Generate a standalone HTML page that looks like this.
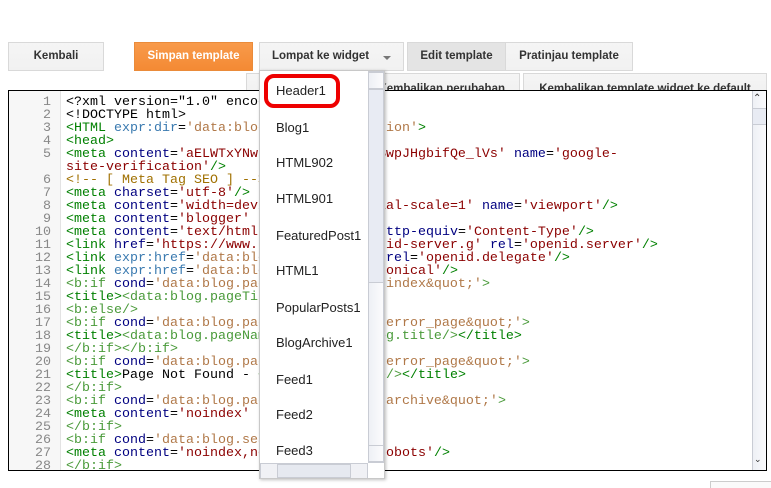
<!DOCTYPE html>
<html><head><style>
*{margin:0;padding:0;box-sizing:border-box}
body{width:771px;height:488px;background:#fff;position:relative;overflow:hidden;font-family:"Liberation Sans",sans-serif}
.btn{position:absolute;height:29px;border:1px solid #d9d9d9;background:linear-gradient(#f5f5f5,#f1f1f1);font-size:11.5px;font-weight:bold;color:#333;text-align:center;line-height:27px}
.ed{position:absolute;left:8px;top:90px;width:759px;height:381px;border:1px solid #000;overflow:hidden;background:#fff}
.gut{position:absolute;left:0;top:0;width:52px;height:100%;background:#f7f7f7;border-right:1px solid #e3e3e3}
.code{position:absolute;left:0;top:5px;font-family:"Liberation Mono",monospace;font-size:13.33px;line-height:13px}
.r{height:13px;white-space:pre;line-height:13px}
.n{display:inline-block;width:42px;text-align:right;color:#888;margin-right:15px}
.t{color:#008000}.a{color:#000080}.v{color:#8b0000}.g{color:#4a9a3a}.b{color:#b07848}.c{color:#a07000}
.dd{position:absolute;left:259px;top:70px;width:126px;height:409px;background:#fff;border:1px solid #c8c8c8;box-shadow:1px 1px 3px rgba(0,0,0,.25);overflow:hidden}
.it{position:absolute;left:16px;font-size:13px;color:#222}
.sb{position:absolute;background:linear-gradient(90deg,#eef0f5,#fbfbfd);border:1px solid #c9ccd4}
</style></head><body>
<div class="btn" style="left:8px;top:42px;width:96px">Kembali</div>
<div class="btn" style="left:134px;top:42px;width:119px;background:linear-gradient(#f89a4a,#f48a34);border-color:#ea8b3a;color:#fff">Simpan template</div>
<div class="btn" style="left:259px;top:42px;width:145px;text-align:left;padding-left:12px;font-weight:bold">Lompat ke widget <span style="position:absolute;left:123px;top:13px;border:4px solid transparent;border-top:4px solid #777;width:0;height:0"></span></div>
<div class="btn" style="left:407px;top:42px;width:99px;background:#e4e4e4">Edit template</div>
<div class="btn" style="left:505px;top:42px;width:128px">Pratinjau template</div>
<div class="btn" style="left:246px;top:73px;width:274px;height:20px;line-height:30px;text-align:right;padding-right:14px">Kembalikan perubahan</div>
<div class="btn" style="left:523px;top:73px;width:244px;height:20px;line-height:30px">Kembalikan template widget ke default</div>
<div class="ed"><div class="gut"></div>
<div class="code"><div class="r"><span class="n">1</span>&lt;?xml version="1.0" encoding="UTF-8" ?&gt;</div><div class="r"><span class="n">2</span>&lt;!DOCTYPE html&gt;</div><div class="r"><span class="n">3</span><span class="t">&lt;HTML</span> <span class="a" style="color:#3a7ab0">expr:dir</span>=<span class="b">'data:blog.languageDirection'</span><span class="t">&gt;</span></div><div class="r"><span class="n">4</span><span class="t">&lt;head&gt;</span></div><div class="r"><span class="n">5</span><span class="t">&lt;meta</span> <span class="a">content</span>=<span class="v">'aELWTxYNwRkqH0DNaxS4M3e-BwpJHgbifQe_lVs'</span> <span class="a">name</span>=<span class="v">'google-</span></div><div class="r"><span class="n"></span><span class="v">site-verification'</span><span class="t">/&gt;</span></div><div class="r"><span class="n">6</span><span class="c">&lt;!-- [ Meta Tag SEO ] --&gt;</span></div><div class="r"><span class="n">7</span><span class="t">&lt;meta</span> <span class="a">charset</span>=<span class="v">'utf-8'</span><span class="t">/&gt;</span></div><div class="r"><span class="n">8</span><span class="t">&lt;meta</span> <span class="a">content</span>=<span class="v">'width=device-width, initial-scale=1'</span> <span class="a">name</span>=<span class="v">'viewport'</span><span class="t">/&gt;</span></div><div class="r"><span class="n">9</span><span class="t">&lt;meta</span> <span class="a">content</span>=<span class="v">'blogger'</span> <span class="a">name</span>=<span class="v">'gen'</span><span class="t">/&gt;</span></div><div class="r"><span class="n">10</span><span class="t">&lt;meta</span> <span class="a">content</span>=<span class="v">'text/html; charset=UTF'</span> <span class="a">http-equiv</span>=<span class="v">'Content-Type'</span><span class="t">/&gt;</span></div><div class="r"><span class="n">11</span><span class="t">&lt;link</span> <span class="a">href</span>=<span class="v">'https://www.blogger.com/openid-server.g'</span> <span class="a">rel</span>=<span class="v">'openid.server'</span><span class="t">/&gt;</span></div><div class="r"><span class="n">12</span><span class="t">&lt;link</span> <span class="a" style="color:#3a7ab0">expr:href</span>=<span class="b">'data:blog.homepageUrl'</span> <span class="a">rel</span>=<span class="v">'openid.delegate'</span><span class="t">/&gt;</span></div><div class="r"><span class="n">13</span><span class="t">&lt;link</span> <span class="a" style="color:#3a7ab0">expr:href</span>=<span class="b">'data:blog.url'</span> <span class="a">rel</span>=<span class="v">'canonical'</span><span class="t">/&gt;</span></div><div class="r"><span class="n">14</span><span class="g">&lt;b:if</span> <span class="a">cond</span>=<span class="b">'data:blog.pageType == &amp;quot;index&amp;quot;'</span><span class="g">&gt;</span></div><div class="r"><span class="n">15</span><span class="t">&lt;title&gt;</span><span class="g">&lt;data:blog.pageTitle/&gt;</span><span class="t">&lt;/title&gt;</span></div><div class="r"><span class="n">16</span><span class="g">&lt;b:else/&gt;</span></div><div class="r"><span class="n">17</span><span class="g">&lt;b:if</span> <span class="a">cond</span>=<span class="b">'data:blog.pageType != &amp;quot;error_page&amp;quot;'</span><span class="g">&gt;</span></div><div class="r"><span class="n">18</span><span class="t">&lt;title&gt;</span><span class="g">&lt;data:blog.pageName/&gt; - &lt;data:blog.title/&gt;</span><span class="t">&lt;/title&gt;</span></div><div class="r"><span class="n">19</span><span class="g">&lt;/b:if&gt;&lt;/b:if&gt;</span></div><div class="r"><span class="n">20</span><span class="g">&lt;b:if</span> <span class="a">cond</span>=<span class="b">'data:blog.pageType == &amp;quot;error_page&amp;quot;'</span><span class="g">&gt;</span></div><div class="r"><span class="n">21</span><span class="t">&lt;title&gt;</span>Page Not Found - <span class="g">&lt;data:blog.title/&gt;</span><span class="t">&lt;/title&gt;</span></div><div class="r"><span class="n">22</span><span class="g">&lt;/b:if&gt;</span></div><div class="r"><span class="n">23</span><span class="g">&lt;b:if</span> <span class="a">cond</span>=<span class="b">'data:blog.pageType == &amp;quot;archive&amp;quot;'</span><span class="g">&gt;</span></div><div class="r"><span class="n">24</span><span class="t">&lt;meta</span> <span class="a">content</span>=<span class="v">'noindex'</span> <span class="a">name</span>=<span class="v">'robots'</span><span class="t">/&gt;</span></div><div class="r"><span class="n">25</span><span class="g">&lt;/b:if&gt;</span></div><div class="r"><span class="n">26</span><span class="g">&lt;b:if</span> <span class="a">cond</span>=<span class="b">'data:blog.searchQuery'</span><span class="g">&gt;</span></div><div class="r"><span class="n">27</span><span class="t">&lt;meta</span> <span class="a">content</span>=<span class="v">'noindex,nofollow'</span> <span class="a">name</span>=<span class="v">'robots'</span><span class="t">/&gt;</span></div><div class="r"><span class="n">28</span><span class="g">&lt;/b:if&gt;</span></div></div>
<div class="sb" style="left:743px;top:0;width:15px;height:380px;border-width:0 0 0 1px"></div>
<div class="sb" style="left:743px;top:17px;width:15px;height:17px;background:#e8ebf3"></div>
<div style="position:absolute;left:744px;top:2px;font-size:10px;color:#333">&#8963;</div>
<div style="position:absolute;left:745px;top:363px;font-size:9px;color:#333">&#8964;</div>
</div>
<div class="dd">
<div style="position:absolute;left:4px;top:3px;width:76px;height:34px;border:4px solid #e00;border-radius:10px"></div>
<div class="it" style="top:12px">Header1</div>
<div class="it" style="top:49px">Blog1</div>
<div class="it" style="top:84px">HTML902</div>
<div class="it" style="top:120px">HTML901</div>
<div class="it" style="top:157px">FeaturedPost1</div>
<div class="it" style="top:192px">HTML1</div>
<div class="it" style="top:229px">PopularPosts1</div>
<div class="it" style="top:264px">BlogArchive1</div>
<div class="it" style="top:301px">Feed1</div>
<div class="it" style="top:336px">Feed2</div>
<div class="it" style="top:372px">Feed3</div>
<div class="sb" style="left:108px;top:0;width:16px;height:392px"></div>
<div class="sb" style="left:108px;top:1px;width:16px;height:17px"></div>
<div class="sb" style="left:108px;top:18px;width:16px;height:194px;background:#e8ebf3"></div>
<div class="sb" style="left:108px;top:374px;width:16px;height:17px"></div>
<div class="sb" style="left:0;top:392px;width:108px;height:16px;background:#f0f1f5"></div>
<div class="sb" style="left:17px;top:393px;width:74px;height:14px;background:#e6e9f0"></div>
</div>
<div style="position:absolute;left:710px;top:481px;width:61px;height:7px;border-top:1px solid #ccc;border-left:1px solid #ccc;background:#fafafa"></div>
</body></html>
